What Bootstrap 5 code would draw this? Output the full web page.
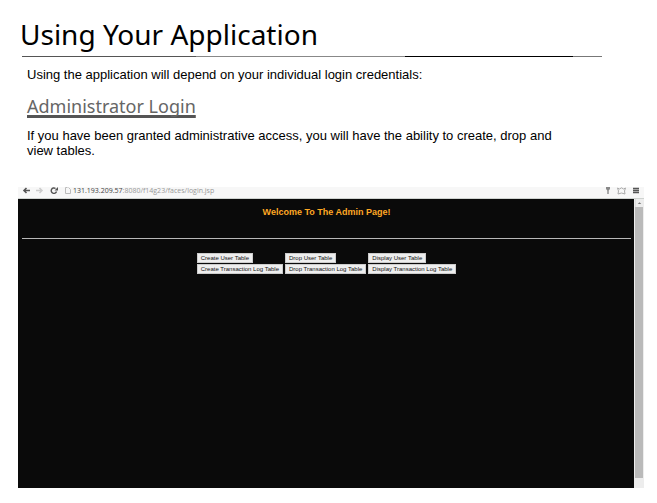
<!DOCTYPE html>
<html lang="en">
<head>
<meta charset="utf-8">
<meta name="viewport" content="width=device-width, initial-scale=1">
<title>Using Your Application</title>
<link href="https://cdn.jsdelivr.net/npm/bootstrap@5.3.0/dist/css/bootstrap.min.css" rel="stylesheet">
<style>
body{font-family:"Liberation Sans",Arial,sans-serif;font-size:13px;line-height:15px;color:#000;background:#fff}
.doc{padding:15px 13px 15px 18px}
.doc-head{margin:0 42px 0 4px}
.doc-title{font:400 28px/38px "Noto Sans",sans-serif;margin:0 0 3px -2px}
.title-rule{height:1px;background:linear-gradient(90deg,#555 0 30%,#888 30% 66%,#000 66% 95%,#777 95%)}
.doc-text{margin:0 70px 0 9px;padding-top:10px}
.sub-title{font:400 18px/24px "Noto Sans",sans-serif;color:#666;margin:12px 0 10px;text-decoration:underline;text-decoration-color:#555;text-decoration-thickness:3px;text-underline-offset:2px;text-decoration-skip-ink:none}
.browser{margin-top:29px}
.address-bar{height:12px;background:#f7f7f7;border-bottom:1px solid #cfd3d0;padding:0 4px;gap:6px;font:7px/8px "Open Sans",sans-serif;color:#999}
.address-bar svg{display:block;flex:none}
.nav-btn{border:0;background:none;padding:0}
.url-host{color:#444}
.admin{background:#0a0a0a;min-height:289px;padding:7px 3px 0 4px}
.admin-title{font-size:9px;line-height:12px;font-weight:700;color:#ffa824;margin-bottom:20px}
.admin-rule{height:1px;background:#b8b8b8;margin-bottom:14px}
.table-actions{grid-template-columns:repeat(3,auto);gap:1px 2px;justify-content:center;justify-items:start}
.action{font-size:6px;line-height:8px;padding:0 3px;border:1px solid #ccc;border-radius:0;background:#eee;color:#111;white-space:nowrap}
.scroll-track{width:10px;background:#ededed;padding:0 1px 10px 1px}
.scroll-thumb{background:#bababa}
.scroll-up{height:8px;border-left:1px solid #ddd}
</style>
<script src="https://cdn.jsdelivr.net/npm/bootstrap@5.3.0/dist/js/bootstrap.bundle.min.js"></script>
</head>
<body>
<main class="doc">
  <header class="doc-head">
    <h1 class="doc-title">Using Your Application</h1>
    <div class="title-rule"></div>
  </header>
  <section class="doc-text">
    <p class="mb-0">Using the application will depend on your individual login credentials:</p>
    <h2 class="sub-title">Administrator Login</h2>
    <p class="mb-0">If you have been granted administrative access, you will have the ability to create, drop and view tables.</p>
  </section>
  <section class="browser">
    <div class="address-bar d-flex align-items-start overflow-hidden">
      <button class="nav-btn" type="button" aria-label="Back"><svg width="8" height="8" viewBox="0 0 8 8"><path d="M8 3.500H2M4.500 1 2 3.500 4.500 6" fill="none" stroke="#555" stroke-width="1.600"/></svg></button>
      <button class="nav-btn" type="button" aria-label="Forward"><svg width="8" height="8" viewBox="0 0 8 8"><path d="M0 3.500h6M3.500 1 6 3.500 3.500 6" fill="none" stroke="#ccc" stroke-width="1.500"/></svg></button>
      <button class="nav-btn" type="button" aria-label="Reload"><svg width="8" height="8" viewBox="0 0 8 8"><path d="M6.500 4.500A2.700 2.700 0 1 1 5.500 1.500" fill="none" stroke="#555" stroke-width="1.400"/><path d="M4.500 3.500H8V0z" fill="#555"/></svg></button>
      <div class="d-flex flex-grow-1">
        <svg width="9" height="8" viewBox="0 0 9 8"><path d="M3.500.500h-2v6h5v-4l-2-2" fill="none" stroke="#bbb"/></svg>
        <span><span class="url-host">131.193.209.57</span>:8080/f14g23/faces/login.jsp</span>
      </div>
      <svg width="6" height="8" viewBox="0 0 6 8"><path d="M1 0h4v2L3.700 3.500V7H2.300V3.500L1 2z" fill="#888"/></svg>
      <svg width="9" height="8" viewBox="0 0 9 8"><path d="M.500 1l2 1L4.500.800 6.500 2l2-1L7.500 4l.500 3-3.500-1L1 7l.500-3z" fill="none" stroke="#aaa"/></svg>
      <button class="nav-btn" type="button" aria-label="Menu"><svg width="8" height="8" viewBox="0 0 8 8"><path d="M1 1.500h6M1 3.500h6M1 5.500h6" stroke="#555" stroke-width="1.300"/></svg></button>
    </div>
    <div class="d-flex">
      <div class="admin flex-grow-1">
        <h3 class="admin-title text-center">Welcome To The Admin Page!</h3>
        <div class="admin-rule"></div>
        <div class="table-actions d-grid">
          <button class="action" type="button">Create User Table</button>
          <button class="action" type="button">Drop User Table</button>
          <button class="action" type="button">Display User Table</button>
          <button class="action" type="button">Create Transaction Log Table</button>
          <button class="action" type="button">Drop Transaction Log Table</button>
          <button class="action" type="button">Display Transaction Log Table</button>
        </div>
      </div>
      <div class="scroll-track d-flex flex-column">
        <svg class="scroll-up flex-shrink-0" width="8" height="8" viewBox="0 0 8 8"><path d="M2 5h4L4 3z" fill="#777"/></svg>
        <div class="scroll-thumb flex-grow-1"></div>
      </div>
    </div>
  </section>
</main>
</body>
</html>
